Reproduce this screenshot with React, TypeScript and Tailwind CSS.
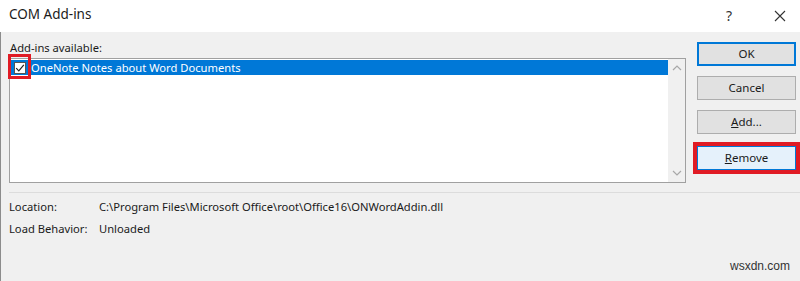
import React from "react";

const font = { fontFamily: '"Segoe UI", "Noto Sans", sans-serif' };

function Btn({ children, cls = "" }: { children: React.ReactNode; cls?: string }) {
  return (
    <div
      className={`w-[99px] h-[24px] flex items-center justify-center text-[11.5px] text-[#1a1a1a] ${cls}`}
    >
      {children}
    </div>
  );
}

export default function App() {
  return (
    <div
      className="w-[800px] h-[281px] bg-[#f0f0f0] overflow-hidden relative text-[#1a1a1a]"
      style={font}
    >
      {/* Title bar */}
      <div className="h-[32px] bg-white flex items-center">
        <div className="pl-[9px] text-[13.5px] text-[#1a1a1a] leading-none pb-[2px]">COM Add-ins</div>
        <div className="ml-auto flex items-center">
          <div className="text-[14px] text-[#333] mr-[42px] pb-[2px]">?</div>
          <svg width="12" height="12" viewBox="0 0 12 12" className="mr-[14px]">
            <path d="M1 1 L11 11 M11 1 L1 11" stroke="#333" strokeWidth="1.1" fill="none" />
          </svg>
        </div>
      </div>

      {/* Body */}
      <div className="border-l border-[#8c8c8c] h-[249px] flex flex-col">
        <div className="flex">
          {/* Left column */}
          <div className="pl-[8px] w-[685px] flex flex-col">
            <div className="h-[16px] mt-[8px] pl-[1px] text-[11.2px] leading-[16px]">Add-ins available:</div>
            <div className="mt-[2px] h-[125px] border border-[#a0a0a0] bg-white flex">
              <div className="flex-1 pl-[1px] pt-[1px]">
                <div className="h-[15px] bg-[#0078d7] flex items-center relative">
                  <div className="ml-[3px] w-[12px] h-[12px] bg-white border border-[#555] flex items-center justify-center">
                    <svg width="10" height="10" viewBox="0 0 10 10">
                      <path d="M1.2 5.2 L3.8 7.8 L8.8 1.8" stroke="#222" strokeWidth="1.2" fill="none" />
                    </svg>
                  </div>
                  <div className="ml-[5px] text-[11.2px] text-white leading-none">
                    OneNote Notes about Word Documents
                  </div>
                  <div className="absolute left-[-3px] top-[-6px] w-[23px] h-[25px] border-[3px] border-[#e01b24]" />
                </div>
              </div>
              {/* Scrollbar */}
              <div className="w-[17px] bg-[#f0f0f0] flex flex-col items-center justify-between py-[6px]">
                <svg width="10" height="6" viewBox="0 0 10 6">
                  <path d="M1 5 L5 1 L9 5" stroke="#a8a8a8" strokeWidth="1.2" fill="none" />
                </svg>
                <svg width="10" height="6" viewBox="0 0 10 6">
                  <path d="M1 1 L5 5 L9 1" stroke="#a8a8a8" strokeWidth="1.2" fill="none" />
                </svg>
              </div>
            </div>
          </div>

          {/* Right column */}
          <div className="ml-[11px] mt-[10px] flex flex-col">
            <Btn cls="bg-[#e1e1e1] border-2 border-[#0078d7]">OK</Btn>
            <Btn cls="mt-[10px] bg-[#e1e1e1] border border-[#adadad]">Cancel</Btn>
            <Btn cls="mt-[10px] bg-[#e1e1e1] border border-[#adadad]">
              <span><span className="underline">A</span>dd...</span>
            </Btn>
            <Btn cls="mt-[12px] w-[97px] bg-[#e5f1fb] border border-[#0078d7] outline-[4px] outline-solid outline-[#e01b24]">
              <span><span className="underline">R</span>emove</span>
            </Btn>
          </div>
        </div>

        {/* Separator */}
        <div className="ml-[8px] mt-[9px] h-px bg-[#dcdcdc]" />

        {/* Info */}
        <div className="pl-[8px] mt-[6px] text-[11.2px] leading-[16px]">
          <div className="flex h-[16px]">
            <div className="w-[90px]">Location:</div>
            <div>C:\Program Files\Microsoft Office\root\Office16\ONWordAddin.dll</div>
          </div>
          <div className="flex h-[16px] mt-[6px]">
            <div className="w-[90px]">Load Behavior:</div>
            <div>Unloaded</div>
          </div>
        </div>

        <div className="mt-auto mb-[6px] mr-[10px] self-end text-[12px] text-[#333]" style={{ fontFamily: '"Liberation Sans", Arial, sans-serif' }}>
          wsxdn.com
        </div>
      </div>
    </div>
  );
}
